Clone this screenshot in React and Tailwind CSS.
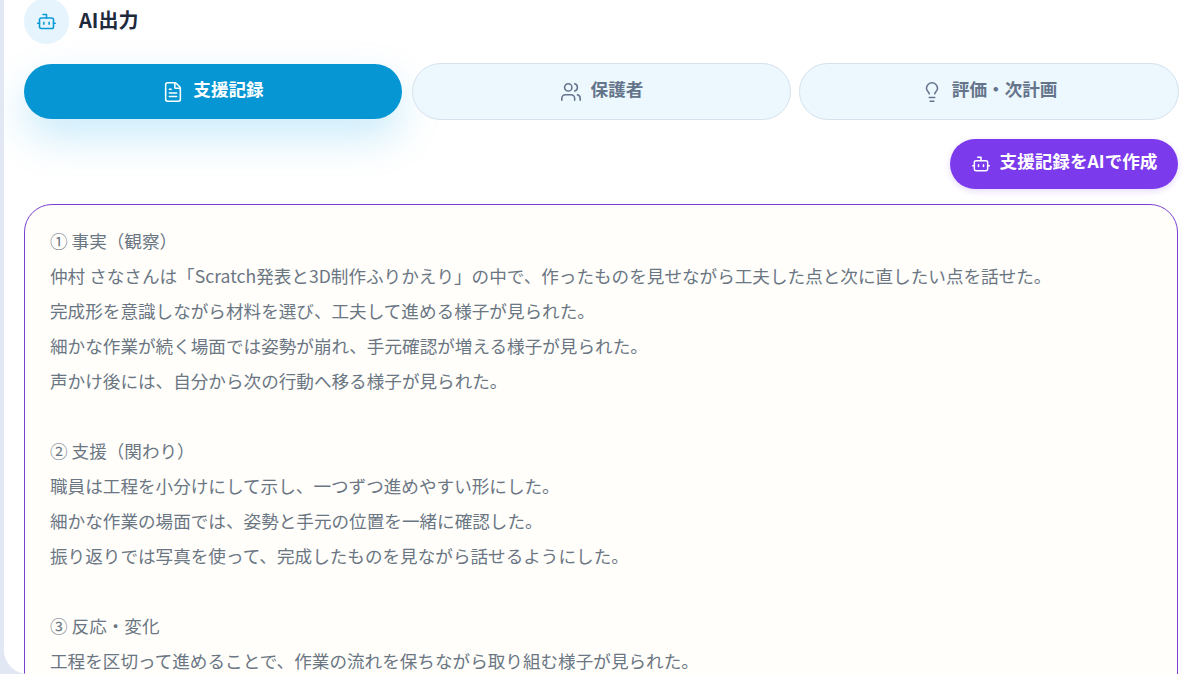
import { Bot, FileText, Users, Lightbulb } from "lucide-react";

const tabs = [
  { label: "支援記録", icon: FileText, active: true },
  { label: "保護者", icon: Users },
  { label: "評価・次計画", icon: Lightbulb },
];

const lines = [
  "① 事実（観察）",
  "仲村 さなさんは「Scratch発表と3D制作ふりかえり」の中で、作ったものを見せながら工夫した点と次に直したい点を話せた。",
  "完成形を意識しながら材料を選び、工夫して進める様子が見られた。",
  "細かな作業が続く場面では姿勢が崩れ、手元確認が増える様子が見られた。",
  "声かけ後には、自分から次の行動へ移る様子が見られた。",
  "",
  "② 支援（関わり）",
  "職員は工程を小分けにして示し、一つずつ進めやすい形にした。",
  "細かな作業の場面では、姿勢と手元の位置を一緒に確認した。",
  "振り返りでは写真を使って、完成したものを見ながら話せるようにした。",
  "",
  "③ 反応・変化",
  "工程を区切って進めることで、作業の流れを保ちながら取り組む様子が見られた。",
];

export default function App() {
  return (
    <div className="h-[674px] overflow-hidden bg-[#e2e8f3] pl-[4px] font-['Noto_Sans_CJK_JP','Noto_Sans',sans-serif]">
      <div className="h-[674px] overflow-hidden rounded-bl-[24px] bg-white pl-[20px] pr-[10px]">
        <div className="-mt-[2px] flex items-center gap-[10px]">
          <div className="flex h-[46px] w-[45px] items-center justify-center rounded-full bg-[#e6f4fd]">
            <Bot size={21} strokeWidth={1.8} className="text-[#0b9ad6]" />
          </div>
          <h2 className="pb-[3px] text-[20px] font-bold text-[#1e293b]">AI出力</h2>
        </div>

        <div className="-mr-[1px] mt-[19px] grid grid-cols-3 items-center gap-[8px]">
          {tabs.map((tab) => (
            <button
              key={tab.label}
              className={
                tab.active
                  ? "flex h-[55px] w-[378px] items-center justify-center gap-[9px] rounded-full bg-[#0596d3] text-[17.6px] font-bold text-white shadow-[0_18px_40px_rgba(14,165,233,0.22)]"
                  : "flex h-[57px] items-center justify-center gap-[9px] rounded-full border border-[#d5e2ee] bg-[#ecf7fe] text-[17.6px] font-bold text-[#64748b]"
              }
            >
              <tab.icon size={22} strokeWidth={1.7} />
              <span className="pb-[5px]">{tab.label}</span>
            </button>
          ))}
        </div>

        <div className="mt-[19px] flex justify-end">
          <button className="flex h-[50px] w-[228px] items-center justify-center gap-[9px] rounded-full bg-[#7c3aed] text-[17.6px] font-bold text-white shadow-[0_2px_6px_rgba(124,58,237,0.2)]">
            <Bot size={20} strokeWidth={1.8} />
            <span className="pb-[5px]">支援記録をAIで作成</span>
          </button>
        </div>

        <div className="mt-[15px] h-[600px] rounded-[28px] border border-[#7a3fd1] bg-[#fffefb] px-[25px] py-[18px] text-[17.6px] leading-[35px] text-[#6b7683]">
          {lines.map((line, i) => (
            <div key={i} className="h-[35px] whitespace-nowrap">
              {line}
            </div>
          ))}
        </div>
      </div>
    </div>
  );
}
